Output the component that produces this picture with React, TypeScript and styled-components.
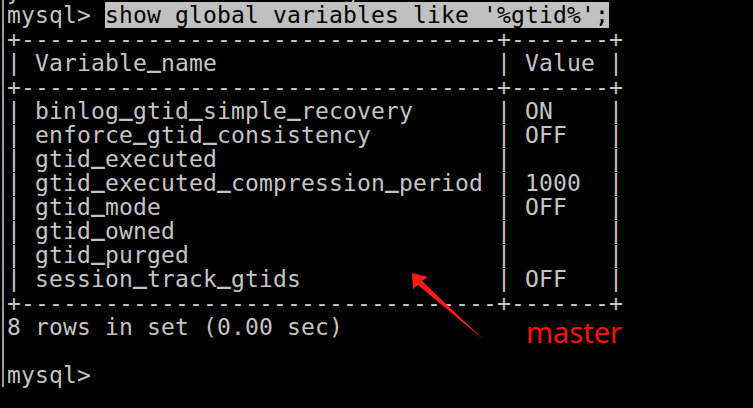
import React from "react";
import styled, { createGlobalStyle } from "styled-components";

const GlobalStyle = createGlobalStyle`
  html, body {
    margin: 0;
    padding: 0;
    background: #000;
    width: 753px;
    height: 408px;
    overflow: hidden;
  }
`;

const Screen = styled.div`
  position: relative;
  width: 753px;
  height: 408px;
  background: #000;
  overflow: hidden;
`;

const Terminal = styled.div`
  margin-left: 2px;
  border-left: 2px solid #9c9c9c;
  padding-left: 3px;
  height: 408px;
  display: flex;
  flex-direction: column;
  margin-top: -21px;
  font-family: "DejaVu Sans Mono", "Liberation Mono", monospace;
  font-size: 23px;
  letter-spacing: 0.153px;
  color: #c4c4c4;
`;

const Line = styled.div`
  height: 24px;
  line-height: 24px;
  white-space: pre;
  flex: none;
`;

const Underscore = styled.span`
  line-height: 0;
  vertical-align: 3px;
  font-weight: bold;
`;

const Selected = styled.span`
  background: #c0c0c0;
  color: #000;
`;

const Label = styled.div`
  position: absolute;
  left: 526px;
  top: 318px;
  font-family: "Noto Sans", "Liberation Sans", sans-serif;
  font-size: 29px;
  line-height: 28px;
  color: #ff1010;
`;

const Arrow = styled.svg`
  position: absolute;
  left: 0;
  top: 0;
  pointer-events: none;
`;

const rows: [string, string][] = [
  ["binlog_gtid_simple_recovery", "ON"],
  ["enforce_gtid_consistency", "OFF"],
  ["gtid_executed", ""],
  ["gtid_executed_compression_period", "1000"],
  ["gtid_mode", "OFF"],
  ["gtid_owned", ""],
  ["gtid_purged", ""],
  ["session_track_gtids", "OFF"],
];

const border = "+" + "-".repeat(34) + "+" + "-".repeat(7) + "+";
const row = (a: string, b: string) => "| " + a.padEnd(32) + " | " + b.padEnd(5) + " |";

function Mono({ text }: { text: string }) {
  const parts = text.split("_");
  return (
    <>
      {parts.map((p, i) => (
        <React.Fragment key={i}>
          {i > 0 && <Underscore>_</Underscore>}
          {p}
        </React.Fragment>
      ))}
    </>
  );
}

export default function App() {
  return (
    <Screen>
      <GlobalStyle />
      <Terminal>
        <Line>{"y" + " ".repeat(23) + "g"}</Line>
        <Line>
          {"mysql> "}
          <Selected>show global variables like '%gtid%';</Selected>
        </Line>
        <Line>{border}</Line>
        <Line>
          <Mono text={row("Variable_name", "Value")} />
        </Line>
        <Line>{border}</Line>
        {rows.map(([a, b]) => (
          <Line key={a}>
            <Mono text={row(a, b)} />
          </Line>
        ))}
        <Line>{border}</Line>
        <Line>8 rows in set (0.00 sec)</Line>
        <Line> </Line>
        <Line>{"mysql> "}</Line>
      </Terminal>
      <Arrow width="753" height="408" viewBox="0 0 753 408">
        <polygon
          points="412,273 428,277 422,281 484,340 418,285 413,289"
          fill="#ff1a1a"
        />
      </Arrow>
      <Label>master</Label>
    </Screen>
  );
}
